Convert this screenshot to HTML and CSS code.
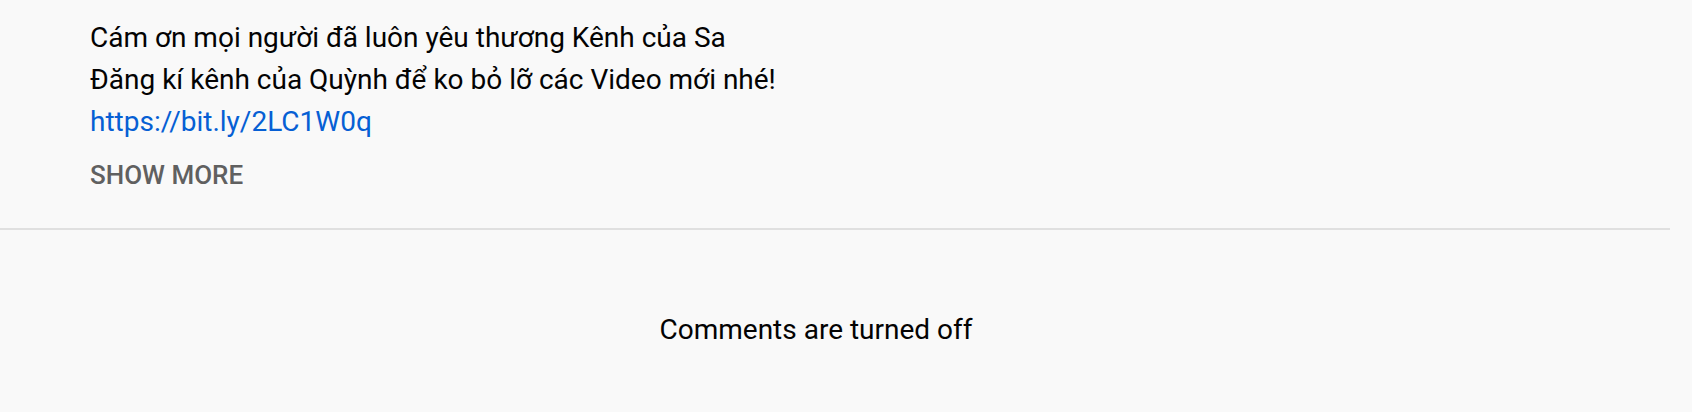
FILE: index.html
```html
<!DOCTYPE html>
<html lang="vi">
<head>
<meta charset="utf-8">
<link rel="stylesheet" href="styles.css">
</head>
<body>
<div class="page">
  <div class="description">
    <div class="desc-text">
      <div class="line">Cám ơn mọi người đã luôn yêu thương Kênh của Sa</div>
      <div class="line">Đăng kí kênh của Quỳnh để ko bỏ lỡ các Video mới nhé!</div>
      <div class="line"><a class="link" href="#">https://bit.ly/2LC1W0q</a></div>
    </div>
    <div class="show-more">SHOW MORE</div>
  </div>
  <div class="divider"></div>
  <div class="comments-off">Comments are turned off</div>
</div>
</body>
</html>
```
FILE: styles.css
```css
html, body {
  margin: 0;
  padding: 0;
  background: #f9f9f9;
}
body {
  font-family: Roboto, "Noto Sans", Arial, sans-serif;
  color: #030303;
  height: 412px;
  overflow: hidden;
}
.page {
  width: 1670px;
}
.description {
  padding: 17px 0 0 90px;
}
.desc-text {
  font-size: 28px;
  line-height: 42px;
}
.link {
  color: #065fd4;
  text-decoration: none;
}
.show-more {
  margin-top: 11px;
  font-size: 26px;
  line-height: 42px;
  font-weight: 500;
  color: #606060;
}
.divider {
  margin-top: 32px;
  height: 2px;
  background: #e0e0e0;
}
.comments-off {
  margin-top: 79px;
  padding-right: 38px;
  text-align: center;
  font-size: 28px;
  line-height: 42px;
}
```
